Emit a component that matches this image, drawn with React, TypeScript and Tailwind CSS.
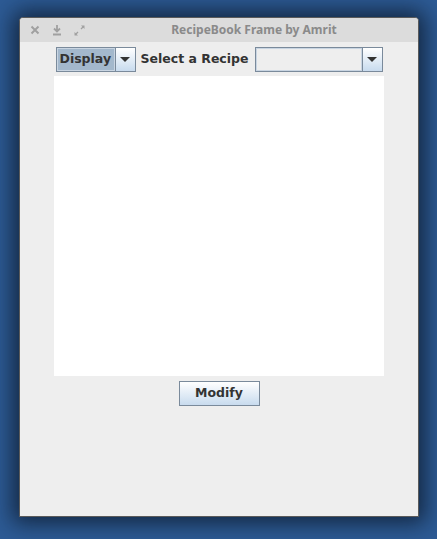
// Java Swing "Metal" frame mock — RecipeBook

function Arrow() {
  return (
    <svg width="10" height="6" viewBox="0 0 10 6" className="block">
      <path d="M0 0h10L5 5z" fill="#333" />
    </svg>
  )
}

function ComboArrow() {
  return (
    <div className="flex w-[20px] items-center justify-center self-stretch border-l border-[#7a8a9b] bg-gradient-to-b from-white to-[#c8dbee]">
      <Arrow />
    </div>
  )
}

function TitleIcons() {
  return (
    <div className="flex items-center gap-[12px] pl-[10px]">
      <svg width="10" height="10" viewBox="0 0 10 10">
        <path d="M1.5 1.5l7 7M8.5 1.5l-7 7" stroke="#a0a0a0" strokeWidth="2" />
      </svg>
      <svg width="10" height="11" viewBox="0 0 10 11">
        <path d="M5 0v6M2 3.5L5 6.5L8 3.5" stroke="#a0a0a0" strokeWidth="1.8" fill="none" />
        <path d="M1 9.5h8" stroke="#a0a0a0" strokeWidth="2" />
      </svg>
      <svg width="11" height="11" viewBox="0 0 11 11">
        <path d="M7 0.5h3.5V4z" fill="#a0a0a0" />
        <path d="M4 10.5H0.5V7z" fill="#a0a0a0" />
        <path d="M9.5 1.5L7 4M1.5 9.5L4 7" stroke="#a0a0a0" strokeWidth="1.3" />
      </svg>
    </div>
  )
}

export default function App() {
  const label = "font-['DejaVu_Sans',sans-serif] text-[12.5px] font-bold text-[#333]"
  return (
    <div className="h-[539px] w-[437px] overflow-hidden bg-[#2d5b95] pl-[19px] pt-[17px]">
      <div className="flex h-[500px] w-[400px] flex-col overflow-hidden rounded-t-[4px] border border-[#5a5a5a] bg-[#eeeeee] shadow-[0_0_22px_6px_rgba(10,20,35,0.75)]">
        <div className="relative flex h-[24px] shrink-0 items-center bg-[#dcdcdc]">
          <TitleIcons />
          <div className="absolute inset-y-0 left-[70px] right-0 flex items-center justify-center font-['Noto_Sans',sans-serif] text-[12px] font-bold text-[#8a8a8a]">
            RecipeBook Frame by Amrit
          </div>
        </div>

        <div className="flex flex-col items-center gap-[4px] pt-[5px]">
          <div className="flex h-[25px] items-center gap-[5px]">
            <div className="flex h-[25px] w-[80px] border border-[#7a8a9b] bg-white">
              <div className="flex flex-1 items-center border border-[#c9d5e2] bg-[#a3b8cc] pl-[2px]">
                <span className={label}>Display</span>
              </div>
              <ComboArrow />
            </div>
            <span className={label + ' pr-[1px]'}>Select a Recipe</span>
            <div className="flex h-[25px] w-[128px] border border-[#7a8a9b]">
              <div className="flex-1 border border-[#c9d5e2] bg-[#eeeeee]" />
              <ComboArrow />
            </div>
          </div>

          <div className="h-[300px] w-[330px] bg-white" />

          <button className="mt-[1px] flex h-[25px] w-[81px] items-center justify-center border border-[#7a8a9b] bg-gradient-to-b from-white to-[#c8dbee]">
            <span className={label}>Modify</span>
          </button>
        </div>
      </div>
    </div>
  )
}
